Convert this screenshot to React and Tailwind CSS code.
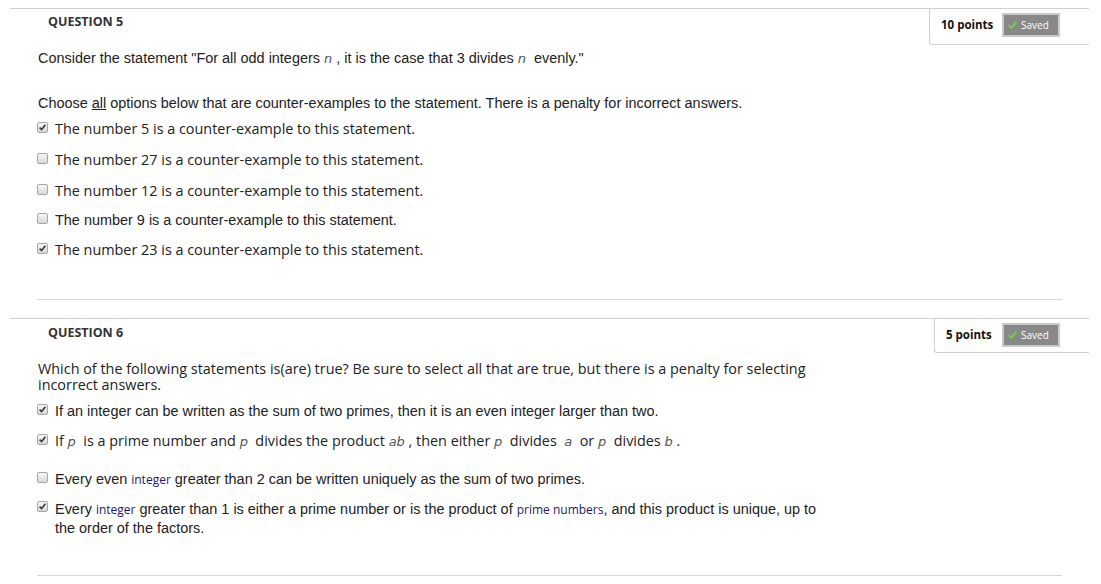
import React from 'react';

const arial = { fontFamily: '"Liberation Sans", Arial, sans-serif', fontSize: '14.45px' };
const open = { fontFamily: '"Open Sans", "Noto Sans", sans-serif', fontSize: '14.4px' };
const openHead = { fontFamily: '"Open Sans", "Noto Sans", sans-serif' };

const Box = ({ checked }) => (
    <span className="flex items-center justify-center w-[11px] h-[11px] shrink-0 rounded-[2px] border border-[#a6a6a6] bg-gradient-to-b from-[#f6f6f6] to-[#d9d9d9]">
        {checked && (
            <svg width="9" height="9" viewBox="0 0 9 9">
                <path d="M1.6 4.6 L3.6 6.6 L7.4 1.8" fill="none" stroke="#3a3a3a" strokeWidth="1.6" />
            </svg>
        )}
    </span>
);

const Points = ({ label, width, pb }) => (
    <div className={`flex items-start justify-between border-l border-b border-[#cfcfcf] rounded-bl-[3px] pl-[11px] pr-[29px] pt-[4px] ${width} ${pb}`} style={openHead}>
        <span className="text-[11.5px] font-bold leading-[24px] text-[#111]">{label}</span>
        <span className="flex items-center gap-[4px] w-[58px] h-[24px] pl-[4px] bg-[#888] border-2 border-[#c9c9c9] text-white text-[10px] leading-none">
            <svg width="9" height="8" viewBox="0 0 9 8">
                <path d="M0.8 4.2 L3.4 6.8 L8.4 0.8" fill="none" stroke="#74d23a" strokeWidth="1.8" />
            </svg>
            Saved
        </span>
    </div>
);

const Option = ({ checked, mt, children, font = arial, lead = 'leading-[16px]' }) => (
    <div className={`flex items-start ${mt}`}>
        <span className="flex pt-[1px] -ml-[1px] leading-none"><Box checked={checked} /></span>
        <div className={`pl-[7px] text-[#222] ${lead}`} style={font}>{children}</div>
    </div>
);

const V = ({ children }) => (
    <span className="italic text-[#555]" style={{ fontFamily: '"DejaVu Sans", sans-serif', fontSize: '13px' }}>{children}</span>
);

const Small = ({ children }) => (
    <span className="text-[#1f1766]" style={{ fontFamily: '"Open Sans", sans-serif', fontSize: '12px', lineHeight: '1' }}>{children}</span>
);

export default function App() {
    return (
        <div className="bg-white w-[1101px] h-[584px] overflow-hidden">
            <div className="ml-[10px] w-[1079px] pt-[8px]">
                {/* question 5 */}
                <div className="flex justify-between border-t border-[#d0d0d0]">
                    <div className="pl-[38px] pt-[5px] text-[12.5px] font-bold leading-[16px] text-[#333]" style={openHead}>QUESTION 5</div>
                    <Points label="10 points" width="w-[160px]" pb="pb-[7px]" />
                </div>
                <div className="pl-[28px] text-[#222]" style={arial}>
                    <p className="mt-[5px] leading-[16px]">
                        Consider the statement "For all odd integers <V>n</V> , it is the case that 3 divides <V>n</V>&nbsp; evenly."
                    </p>
                    <p className="mt-[28px] leading-[16px]">
                        Choose <span className="underline">all</span> options below that are counter-examples to the statement. There is a penalty for incorrect answers.
                    </p>
                    <Option checked mt="mt-[10px]" font={open}>The number 5 is a counter-example to this statement.</Option>
                    <Option mt="mt-[15px]" font={open}>The number 27 is a counter-example to this statement.</Option>
                    <Option mt="mt-[15px]" font={open}>The number 12 is a counter-example to this statement.</Option>
                    <Option mt="mt-[13px]">The number 9 is a counter-example to this statement.</Option>
                    <Option checked mt="mt-[14px]" font={open}>The number 23 is a counter-example to this statement.</Option>
                </div>
                <div className="mt-[41px] ml-[27px] w-[1025px] border-t border-[#d6d6d6]" />

                {/* question 6 */}
                <div className="mt-[18px] flex justify-between border-t border-[#d0d0d0]">
                    <div className="pl-[38px] pt-[6px] text-[12.5px] font-bold leading-[16px] text-[#333]" style={openHead}>QUESTION 6</div>
                    <Points label="5 points" width="w-[155px]" pb="pb-[5px]" />
                </div>
                <div className="pl-[28px] text-[#222]">
                    <p className="mt-[8px] leading-[16px] w-[780px]" style={open}>
                        Which of the following statements is(are) true? Be sure to select all that are true, but there is a penalty for selecting incorrect answers.
                    </p>
                    <Option checked mt="mt-[10px]">If an integer can be written as the sum of two primes, then it is an even integer larger than two.</Option>
                    <Option checked mt="mt-[14px]" font={open}>
                        If <V>p</V>&nbsp; is a prime number and <V>p</V>&nbsp; divides the product <V>ab</V> , then either <V>p</V>&nbsp; divides&nbsp; <V>a</V>&nbsp; or <V>p</V>&nbsp; divides <V>b</V> .
                    </Option>
                    <Option mt="mt-[21px]">
                        Every even <Small>integer</Small> greater than 2 can be written uniquely as the sum of two primes.
                    </Option>
                    <Option checked mt="mt-[13px]" lead="leading-[19px] w-[775px]">
                        Every <Small>integer</Small> greater than 1 is either a prime number or is the product of <Small>prime numbers</Small>, and this product is unique, up to the order of the factors.
                    </Option>
                </div>
                <div className="mt-[37px] ml-[27px] w-[1025px] border-t border-[#d6d6d6]" />
            </div>
        </div>
    );
}
